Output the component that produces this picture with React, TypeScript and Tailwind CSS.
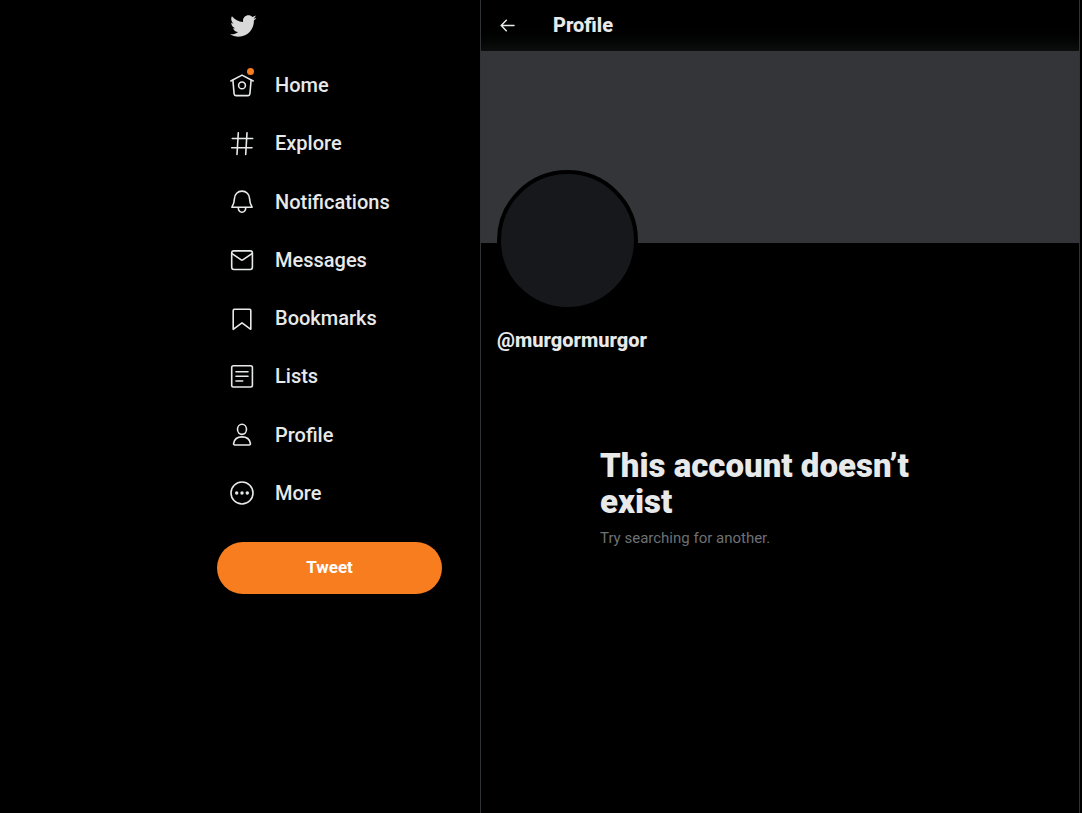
import type { ReactNode } from "react";

interface NavItemProps {
  label: string;
  icon: ReactNode;
  hasUpdate?: boolean;
}

const NAV_ITEMS: NavItemProps[] = [
  {
    label: "Home",
    hasUpdate: true,
    icon: (
      <>
        <path d="M1.8 9 13 3.100 24.200 9" />
        <path d="M3.900 8.200 5.100 21.800c.1 1.100.8 1.800 1.800 1.800h12.200c1 0 1.700-.7 1.800-1.800L22.100 8.200" />
        <circle cx="13" cy="13.400" r="3.400" />
      </>
    ),
  },
  {
    label: "Explore",
    icon: <path d="M9.300 2.700 8 24.500M18 2.700l-1.300 21.800M3.300 8.500h20.400M2.700 17.800h20.300" />,
  },
  {
    label: "Notifications",
    icon: (
      <>
        <path d="M13 2.100c-4.400 0-7.300 3.200-7.500 7.200-.2 3.900-.7 6-2.600 9h20.200c-1.900-3-2.400-5.100-2.600-9-.2-4-3.100-7.200-7.500-7.200z" />
        <path d="M9.200 18.500c.2 2.900 1.700 4.700 3.800 4.700s3.600-1.800 3.800-4.700" />
      </>
    ),
  },
  {
    label: "Messages",
    icon: (
      <>
        <rect x="2.700" y="3.900" width="20.700" height="18.600" rx="2.200" />
        <path d="m3 6.600 9.200 6.300c.5.300 1.100.3 1.600 0L23 6.600" />
      </>
    ),
  },
  {
    label: "Bookmarks",
    icon: <path d="M4.200 24.300V5.400c0-.7.500-1.200 1.200-1.200h15.200c.7 0 1.200.5 1.200 1.200v18.900L13 17.900z" />,
  },
  {
    label: "Lists",
    icon: (
      <>
        <rect x="2.700" y="2.700" width="20.700" height="21.300" rx="1.700" />
        <path d="M7 8.700h12M7 13.300h12M7 18h6.700" />
      </>
    ),
  },
  {
    label: "Profile",
    icon: (
      <>
        <ellipse cx="13" cy="7.300" rx="4.500" ry="5.100" />
        <path d="M13 14.900c-4.600 0-7.700 2.500-8.400 6.600-.1.900.4 1.500 1.300 1.500h14.200c.9 0 1.400-.6 1.300-1.500-.7-4.100-3.800-6.600-8.400-6.600z" />
      </>
    ),
  },
  {
    label: "More",
    icon: (
      <>
        <circle cx="13" cy="13" r="11" />
        <g fill="currentColor" stroke="none">
          <circle cx="7.700" cy="13" r="1.700" />
          <circle cx="13" cy="13" r="1.700" />
          <circle cx="18.300" cy="13" r="1.700" />
        </g>
      </>
    ),
  },
];

const NavItem: React.FC<NavItemProps> = ({ label, icon, hasUpdate }) => {
  return (
    <a href="#" className="flex items-center gap-5 px-3 text-xl font-medium">
      <span className="relative">
        <svg
          className="w-[26px] h-[26px]"
          viewBox="0 0 26 26"
          fill="none"
          stroke="currentColor"
          strokeWidth="1.6"
          strokeLinecap="round"
          strokeLinejoin="round"
          aria-hidden="true"
        >
          {icon}
        </svg>
        {hasUpdate && (
          <span className="absolute -top-1 right-px w-[7px] h-[7px] rounded-full bg-[#f77d1f]" />
        )}
      </span>
      {label}
    </a>
  );
};

const Sidebar: React.FC = () => {
  return (
    <header className="flex flex-1 justify-end">
      <div className="w-[275px] px-3">
        <a href="#" aria-label="Twitter" className="flex items-center h-14 px-3 pb-1 text-[#d9d9d9]">
          <svg className="w-7 h-7" viewBox="0 0 24 24" fill="currentColor" aria-hidden="true">
            <path d="M23.643 4.937c-.835.37-1.732.62-2.675.733.962-.576 1.7-1.49 2.048-2.578-.9.534-1.897.922-2.958 1.13-.85-.904-2.06-1.47-3.4-1.47-2.572 0-4.658 2.086-4.658 4.66 0 .364.042.718.12 1.06-3.873-.195-7.304-2.05-9.602-4.868-.4.69-.63 1.49-.63 2.342 0 1.616.823 3.043 2.072 3.878-.764-.025-1.482-.234-2.11-.583v.06c0 2.257 1.605 4.14 3.737 4.568-.392.106-.803.162-1.227.162-.3 0-.593-.028-.877-.082.593 1.85 2.313 3.198 4.352 3.234-1.595 1.25-3.604 1.995-5.786 1.995-.376 0-.747-.022-1.112-.065 2.062 1.323 4.51 2.093 7.14 2.093 8.57 0 13.255-7.098 13.255-13.254 0-.2-.005-.402-.014-.602.91-.658 1.7-1.477 2.323-2.41z" />
          </svg>
        </a>
        <nav className="grid auto-rows-fr h-[466px]">
          {NAV_ITEMS.map((item) => (
            <NavItem key={item.label} {...item} />
          ))}
        </nav>
        <button
          type="button"
          className="mt-5 w-[225px] h-[52px] rounded-full bg-[#f77d1f] text-white text-[17px] font-bold"
        >
          Tweet
        </button>
      </div>
    </header>
  );
};

const ProfileColumn: React.FC = () => {
  return (
    <main className="w-[600px] mr-0.5 border-x border-[#2f3336]">
      <div className="flex items-center gap-9 h-[51px] px-4 pb-0.5 bg-linear-to-b from-black from-40% to-[#0d0f0f]">
        <button type="button" aria-label="Back">
          <svg
            className="w-5 h-5"
            viewBox="0 0 20 20"
            fill="none"
            stroke="currentColor"
            strokeWidth="1.5"
            strokeLinecap="round"
            strokeLinejoin="round"
            aria-hidden="true"
          >
            <path d="M17 10.500H4.500M9.300 5.300 4.200 10.500l5.100 5.200" />
          </svg>
        </button>
        <h2 className="text-xl font-extrabold">Profile</h2>
      </div>

      <div className="h-48 bg-[#343539]" />

      <div className="px-4">
        <div className="relative -mt-[73px] w-[141px] h-[141px] rounded-full border-4 border-black bg-[#17181c]" />
        <p className="mt-[15px] text-xl font-extrabold">@murgormurgor</p>
      </div>

      <div className="mx-auto mt-[94px] max-w-[360px]">
        <h1 className="text-[33px] leading-9 font-black">This account doesn’t exist</h1>
        <p className="mt-2 text-[15px] leading-5 text-[#6e7175]">Try searching for another.</p>
      </div>
    </main>
  );
};

const App: React.FC = () => {
  return (
    <div className="flex min-h-screen bg-black text-[#e7e9ea] font-['Roboto','Liberation_Sans',sans-serif]">
      <Sidebar />
      <ProfileColumn />
    </div>
  );
};

export default App;
